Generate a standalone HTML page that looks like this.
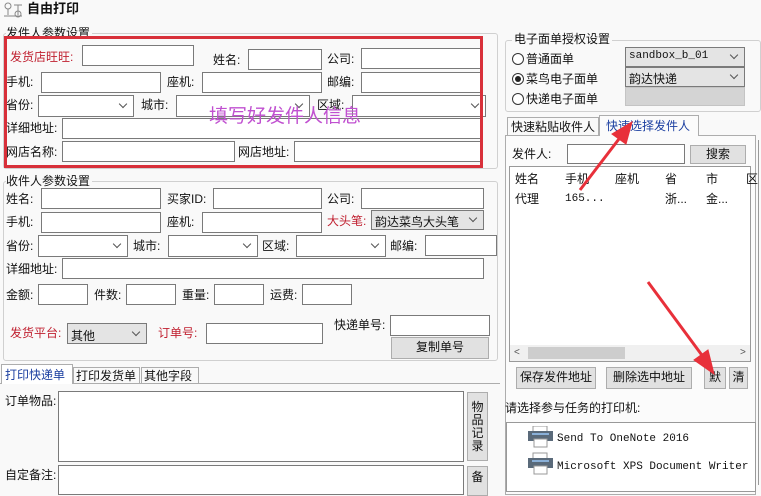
<!DOCTYPE html>
<html><head><meta charset="utf-8">
<style>
*{box-sizing:border-box;margin:0;padding:0}
body{width:761px;height:485px;overflow:hidden;background:#f9f9f9;font-family:"Liberation Sans","Noto Sans CJK SC","WenQuanYi Zen Hei",sans-serif;font-size:12px;color:#111;position:relative}
.a{position:absolute;white-space:nowrap;line-height:14px}
.i{position:absolute;background:#fff;border:1px solid #7a7a7a}
.s{position:absolute;background:#fff;border:1px solid #7a7a7a}
.s:after{content:"";position:absolute;right:7px;top:50%;margin-top:-5px;width:5px;height:5px;border-right:1px solid #555;border-bottom:1px solid #555;transform:rotate(45deg)}
.g{background:#e4e4e4}
.b{position:absolute;background:#e1e1e1;border:1px solid #adadad;text-align:center;line-height:19px}
.r{color:#c02030}
.grp{position:absolute;border:1px solid #d0d0d0;border-radius:3px}
.m{font-family:"Liberation Mono","DejaVu Sans Mono",monospace;font-size:11px}
.rad{display:inline-block;width:12px;height:12px;border:1px solid #333;border-radius:50%;vertical-align:-2px;margin-right:2px;position:relative;background:#fff}
.rad.on:after{content:"";position:absolute;left:2px;top:2px;width:6px;height:6px;border-radius:50%;background:#222}
</style></head><body>
<svg class="a" style="left:3px;top:2px" width="20" height="16"><circle cx="5" cy="4" r="3" fill="none" stroke="#888"/><line x1="5" y1="7" x2="5" y2="13" stroke="#888"/><line x1="11" y1="3" x2="19" y2="3" stroke="#888"/><line x1="15" y1="3" x2="15" y2="13" stroke="#888"/><circle cx="15" cy="12" r="3" fill="none" stroke="#888"/><line x1="1" y1="14" x2="19" y2="14" stroke="#888"/></svg>
<div class="a" style="left:27px;top:2px;font-weight:bold;font-size:13px">自由打印</div>

<div class="grp" style="left:3px;top:33px;width:495px;height:136px"></div>
<div class="a" style="left:6px;top:26px;background:#f9f9f9;padding-right:2px">发件人参数设置</div>
<div class="a r" style="left:10px;top:50px">发货店旺旺:</div><div class="i" style="left:82px;top:45px;width:112px;height:21px"></div>
<div class="a" style="left:213px;top:53px">姓名:</div><div class="i" style="left:248px;top:49px;width:74px;height:21px"></div>
<div class="a" style="left:327px;top:52px">公司:</div><div class="i" style="left:361px;top:48px;width:120px;height:21px"></div>
<div class="a" style="left:6px;top:75px">手机:</div><div class="i" style="left:41px;top:72px;width:120px;height:21px"></div>
<div class="a" style="left:167px;top:75px">座机:</div><div class="i" style="left:202px;top:72px;width:120px;height:21px"></div>
<div class="a" style="left:327px;top:75px">邮编:</div><div class="i" style="left:361px;top:72px;width:120px;height:21px"></div>
<div class="a" style="left:6px;top:98px">省份:</div><div class="s" style="left:38px;top:95px;width:96px;height:22px"></div>
<div class="a" style="left:141px;top:98px">城市:</div><div class="s" style="left:176px;top:95px;width:134px;height:22px"></div>
<div class="a" style="left:317px;top:98px">区域:</div><div class="s" style="left:352px;top:95px;width:134px;height:22px"></div>
<div class="a" style="left:6px;top:121px">详细地址:</div><div class="i" style="left:62px;top:118px;width:419px;height:21px"></div>
<div class="a" style="left:6px;top:145px">网店名称:</div><div class="i" style="left:62px;top:141px;width:173px;height:21px"></div>
<div class="a" style="left:238px;top:145px">网店地址:</div><div class="i" style="left:294px;top:141px;width:187px;height:21px"></div>
<div class="a" style="left:209px;top:107px;font-size:19px;line-height:20px;color:#c050d0">填写好发件人信息</div>
<div class="a" style="left:4px;top:36px;width:479px;height:132px;border:3px solid #d8303a"></div>

<div class="grp" style="left:3px;top:181px;width:495px;height:180px"></div>
<div class="a" style="left:6px;top:174px;background:#f9f9f9;padding-right:2px">收件人参数设置</div>
<div class="a" style="left:6px;top:192px">姓名:</div><div class="i" style="left:41px;top:188px;width:120px;height:21px"></div>
<div class="a" style="left:167px;top:192px">买家ID:</div><div class="i" style="left:213px;top:188px;width:109px;height:21px"></div>
<div class="a" style="left:327px;top:192px">公司:</div><div class="i" style="left:361px;top:188px;width:123px;height:21px"></div>
<div class="a" style="left:6px;top:215px">手机:</div><div class="i" style="left:41px;top:212px;width:120px;height:21px"></div>
<div class="a" style="left:167px;top:215px">座机:</div><div class="i" style="left:202px;top:212px;width:120px;height:21px"></div>
<div class="a r" style="left:327px;top:214px">大头笔:</div><div class="s g" style="left:371px;top:210px;width:113px;height:20px;padding:2px 3px">韵达菜鸟大头笔</div>
<div class="a" style="left:6px;top:239px">省份:</div><div class="s" style="left:38px;top:235px;width:90px;height:22px"></div>
<div class="a" style="left:133px;top:239px">城市:</div><div class="s" style="left:168px;top:235px;width:90px;height:22px"></div>
<div class="a" style="left:262px;top:239px">区域:</div><div class="s" style="left:296px;top:235px;width:90px;height:22px"></div>
<div class="a" style="left:390px;top:239px">邮编:</div><div class="i" style="left:425px;top:235px;width:72px;height:21px"></div>
<div class="a" style="left:6px;top:262px">详细地址:</div><div class="i" style="left:62px;top:258px;width:422px;height:21px"></div>
<div class="a" style="left:6px;top:288px">金额:</div><div class="i" style="left:38px;top:284px;width:50px;height:21px"></div>
<div class="a" style="left:94px;top:288px">件数:</div><div class="i" style="left:126px;top:284px;width:50px;height:21px"></div>
<div class="a" style="left:182px;top:288px">重量:</div><div class="i" style="left:214px;top:284px;width:50px;height:21px"></div>
<div class="a" style="left:270px;top:288px">运费:</div><div class="i" style="left:302px;top:284px;width:50px;height:21px"></div>
<div class="a r" style="left:10px;top:326px">发货平台:</div><div class="s g" style="left:67px;top:323px;width:80px;height:21px;padding:3px 3px">其他</div>
<div class="a r" style="left:158px;top:326px">订单号:</div><div class="i" style="left:206px;top:323px;width:117px;height:21px"></div>
<div class="a" style="left:334px;top:318px">快递单号:</div><div class="i" style="left:390px;top:315px;width:100px;height:21px"></div>
<div class="b" style="left:391px;top:337px;width:98px;height:22px">复制单号</div>

<div class="a" style="left:0;top:383px;width:500px;border-top:1px solid #adadad"></div>
<div class="a" style="left:1px;top:364px;width:72px;height:20px;border:1px solid #adadad;border-bottom:none;background:#fff;color:#1a3ea0;padding:3px 3px">打印快递单</div>
<div class="a" style="left:73px;top:367px;width:67px;height:17px;border:1px solid #adadad;border-bottom:none;padding:1px 2px">打印发货单</div>
<div class="a" style="left:141px;top:367px;width:58px;height:17px;border:1px solid #adadad;border-bottom:none;padding:1px 2px">其他字段</div>
<div class="a" style="left:5px;top:394px">订单物品:</div><div class="i" style="left:58px;top:391px;width:406px;height:71px"></div>
<div class="b" style="left:467px;top:392px;width:21px;height:69px;line-height:13px;padding-top:8px;white-space:normal">物品记录</div>
<div class="a" style="left:5px;top:468px">自定备注:</div><div class="i" style="left:58px;top:465px;width:406px;height:30px"></div>
<div class="b" style="left:467px;top:466px;width:21px;height:30px;line-height:13px;padding-top:4px">备</div>

<div class="grp" style="left:505px;top:40px;width:256px;height:72px"></div>
<div class="a" style="left:512px;top:32px;background:#f9f9f9;padding:0 2px">电子面单授权设置</div>
<div class="a" style="left:512px;top:52px"><span class="rad"></span>普通面单</div>
<div class="a" style="left:512px;top:72px"><span class="rad on"></span>菜鸟电子面单</div>
<div class="a" style="left:512px;top:92px"><span class="rad"></span>快递电子面单</div>
<div class="s g m" style="left:625px;top:47px;width:120px;height:20px;padding:2px 3px">sandbox_b_01</div>
<div class="s g" style="left:625px;top:67px;width:120px;height:20px;padding:2px 3px">韵达快递</div>
<div class="a" style="left:625px;top:87px;width:120px;height:19px;background:#d4d4d4;border:1px solid #c4c4c4"></div>

<div class="a" style="left:505px;top:135px;width:251px;height:360px;border:1px solid #adadad;background:#fbfbfb"></div>
<div class="a" style="left:507px;top:117px;width:92px;height:18px;border:1px solid #adadad;border-bottom:none;padding:2px 3px">快速粘贴收件人</div>
<div class="a" style="left:599px;top:115px;width:100px;height:21px;border:1px solid #adadad;border-bottom:none;background:#fbfbfb;color:#1a3ea0;padding:3px 6px">快速选择发件人</div>
<div class="a" style="left:758px;top:140px;height:345px;border-left:1px solid #999"></div>
<div class="a" style="left:512px;top:147px">发件人:</div><div class="i" style="left:567px;top:144px;width:118px;height:20px"></div>
<div class="b" style="left:690px;top:145px;width:56px;height:19px;line-height:17px">搜索</div>
<div class="a" style="left:509px;top:166px;width:242px;height:196px;background:#fff;border:1px solid #999"></div>
<div class="a" style="left:515px;top:172px">姓名</div><div class="a" style="left:565px;top:172px">手机</div><div class="a" style="left:615px;top:172px">座机</div><div class="a" style="left:665px;top:172px">省</div><div class="a" style="left:706px;top:172px">市</div><div class="a" style="left:746px;top:172px">区</div>
<div class="a" style="left:515px;top:192px">代理</div><div class="a m" style="left:565px;top:192px">165...</div><div class="a" style="left:665px;top:192px">浙...</div><div class="a" style="left:706px;top:192px">金...</div>
<div class="a" style="left:510px;top:345px;width:240px;height:16px;background:#f0f0f0"></div>
<div class="a" style="left:528px;top:347px;width:97px;height:12px;background:#cdcdcd"></div>
<div class="a" style="left:514px;top:346px;font-size:10px;color:#555">&lt;</div><div class="a" style="left:740px;top:346px;font-size:10px;color:#555">&gt;</div>
<div class="b" style="left:516px;top:367px;width:80px;height:22px">保存发件地址</div>
<div class="b" style="left:606px;top:367px;width:86px;height:22px">删除选中地址</div>
<div class="b" style="left:704px;top:367px;width:22px;height:22px">默</div>
<div class="b" style="left:729px;top:367px;width:19px;height:22px">清</div>
<div class="a" style="left:505px;top:401px">请选择参与任务的打印机:</div>
<div class="a" style="left:506px;top:422px;width:250px;height:70px;background:#fff;border:1px solid #999"></div>
<svg class="a" style="left:527px;top:426px" width="28" height="58">
<g><rect x="6" y="0" width="14" height="6" fill="#fff" stroke="#999"/><rect x="1" y="5" width="25" height="10" fill="#5a6a7a"/><rect x="5" y="7" width="17" height="2" fill="#8ab0d8"/><rect x="7" y="13" width="13" height="8" fill="#fff" stroke="#999"/></g>
<g transform="translate(0,27)"><rect x="6" y="0" width="14" height="6" fill="#fff" stroke="#999"/><rect x="1" y="5" width="25" height="10" fill="#5a6a7a"/><rect x="5" y="7" width="17" height="2" fill="#8ab0d8"/><rect x="7" y="13" width="13" height="8" fill="#fff" stroke="#999"/></g>
</svg>
<div class="a m" style="left:557px;top:432px">Send To OneNote 2016</div>
<div class="a m" style="left:557px;top:460px">Microsoft XPS Document Writer</div>

<svg class="a" style="left:0;top:0" width="761" height="485">
<g fill="#e8303a" stroke="#e8303a">
<line x1="580" y1="190" x2="622" y2="135" stroke-width="3"/>
<polygon points="632,122 626,144 612,134" />
<line x1="648" y1="282" x2="704" y2="358" stroke-width="3"/>
<polygon points="714,374 694,360 708,350"/>
</g>
</svg>
</body></html>
